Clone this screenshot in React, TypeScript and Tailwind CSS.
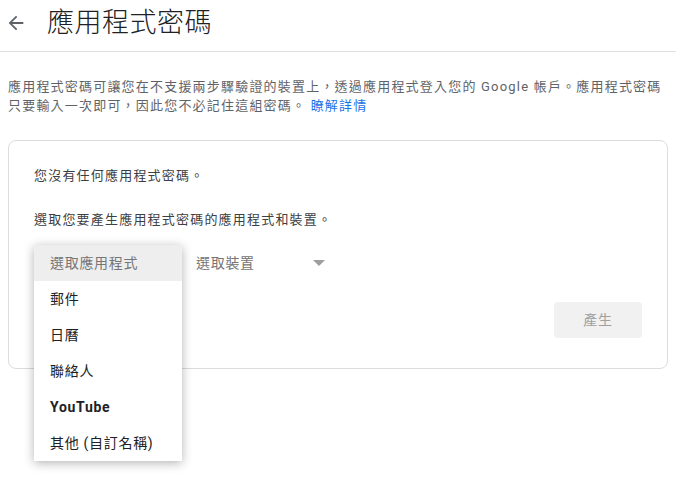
const menuItems = ['郵件', '日曆', '聯絡人', 'YouTube', '其他 (自訂名稱)'];

export default function App() {
  return (
    <div className="h-[480px] w-[676px] overflow-hidden bg-white font-['Roboto','Noto_Sans_CJK_TC',sans-serif] text-[#202124]">
      {/* Header */}
      <div className="flex h-[52px] items-center border-b border-[#e0e0e0] pb-[5px]">
        <svg className="ml-[5px] h-[22px] w-[22px] text-[#5f6368]" viewBox="0 0 24 24" fill="currentColor">
          <path d="M20 11H7.83l5.59-5.59L12 4l-8 8 8 8 1.41-1.41L7.83 13H20v-2z" />
        </svg>
        <h1 className="ml-[20px] text-[27px] font-light tracking-[0.5px] text-[#202124]">應用程式密碼</h1>
      </div>

      {/* Description */}
      <p className="mx-2 mt-[25px] text-[13px] leading-[19px] tracking-[1.2px] text-[#5f6368]">
        應用程式密碼可讓您在不支援兩步驟驗證的裝置上，透過應用程式登入您的 Google 帳戶。應用程式密碼只要輸入一次即可，因此您不必記住這組密碼。{' '}
        <a className="text-[#1a73e8]">瞭解詳情</a>
      </p>

      {/* Card */}
      <div className="mx-2 mt-[25px] h-[229px] rounded-lg border border-[#dadce0] px-[25px] pt-[25px]">
        <p className="text-[13px] leading-[20px] tracking-[1.2px] text-[#3c4043]">您沒有任何應用程式密碼。</p>
        <p className="mt-[24px] text-[13px] leading-[20px] tracking-[1.2px] text-[#3c4043]">選取您要產生應用程式密碼的應用程式和裝置。</p>

        <div className="mt-[15px] flex items-center">
          {/* App select with open menu */}
          <div className="relative h-[36px] w-[148px]">
            <div className="absolute left-0 top-0 z-10 w-[148px] bg-white shadow-[0_2px_10px_rgba(0,0,0,0.3)]">
              <div className="flex h-[36px] items-center bg-[#eeeeee] pl-[16px] text-[14px] tracking-[0.7px] text-[#757575]">選取應用程式</div>
              {menuItems.map((item) => (
                <div
                  key={item}
                  className={`flex h-[36px] items-center pl-[16px] text-[14px] tracking-[0.7px] text-[#202124] ${item === 'YouTube' ? 'font-bold' : ''}`}
                >
                  {item}
                </div>
              ))}
            </div>
          </div>

          {/* Device select */}
          <div className="ml-[14px] flex h-[36px] w-[129px] items-center justify-between text-[14px] tracking-[0.7px] text-[#757575]">
            <span>選取裝置</span>
            <svg className="h-[6px] w-[12px]" viewBox="0 0 12 6">
              <path d="M0 0h12L6 6z" fill="#9e9e9e" />
            </svg>
          </div>
        </div>

        <div className="mt-[21px] flex justify-end">
          <button className="h-[36px] w-[88px] rounded bg-[#f1f1f1] text-[14px] tracking-[0.7px] text-[#a0a0a0]">產生</button>
        </div>
      </div>
    </div>
  );
}
